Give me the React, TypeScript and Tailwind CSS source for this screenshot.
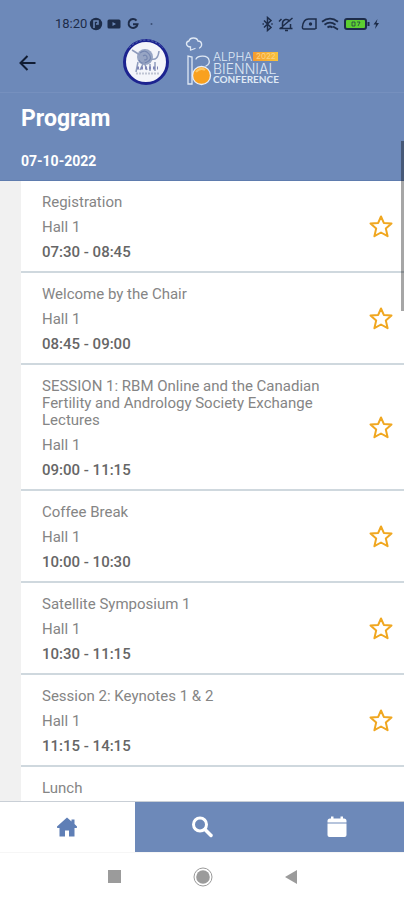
import * as React from "react";
import { clsx } from "clsx";

type Session = {
  title: string;
  hall?: string;
  time?: string;
};

const sessions: Session[] = [
  { title: "Registration", hall: "Hall 1", time: "07:30 - 08:45" },
  { title: "Welcome by the Chair", hall: "Hall 1", time: "08:45 - 09:00" },
  {
    title: "SESSION 1: RBM Online and the Canadian Fertility and Andrology Society Exchange Lectures",
    hall: "Hall 1",
    time: "09:00 - 11:15",
  },
  { title: "Coffee Break", hall: "Hall 1", time: "10:00 - 10:30" },
  { title: "Satellite Symposium 1", hall: "Hall 1", time: "10:30 - 11:15" },
  { title: "Session 2: Keynotes 1 & 2", hall: "Hall 1", time: "11:15 - 14:15" },
  { title: "Lunch" },
];

function StatusBar() {
  return (
    <div className="flex h-10 shrink-0 items-end justify-between pr-6 pl-[55px] pb-2 text-[#1d2c49]">
      <div className="flex h-4 items-center">
        <span className="w-[34px] text-[13px] leading-4">18:20</span>
        <svg viewBox="0 0 66 14" className="h-[14px] w-[66px]" fill="currentColor">
          <circle cx="7" cy="7" r="6.200" />
          <path d="M5 11V4h4v3H7" fill="none" stroke="#6d89b9" strokeWidth="1.6" />
          <rect x="18.500" y="2.500" width="13" height="9" rx="1.500" />
          <path d="M23.500 5v4l3.500-2z" fill="#6d89b9" />
          <path d="M47.500 3.600A4.500 4.500 0 1 0 48.500 7.300h-4.500" fill="none" stroke="currentColor" strokeWidth="2" />
          <circle cx="62.500" cy="7" r="1" opacity=".6" />
        </svg>
      </div>
      <svg viewBox="0 0 118 16" className="h-4 w-[118px]" fill="none" stroke="currentColor" strokeWidth="1.500">
        {/* bluetooth */}
        <path d="M2 4.500l7 7-3.500 3v-13l3.500 3-7 7" />
        <path d="M.5 8h1.400M9.300 8h1.400" />
        {/* muted bell */}
        <path d="M17.500 12.500h13M20.500 12V7.500a4 4 0 0 1 7.500-2M28.500 8v4M23 14.500h3M30.500 2L17.500 13M17 5.500l2.500-2.500" />
        {/* sim */}
        <path d="M53.500 13H42q-2 0-1.500-2.500 1-7.500 6-7.500h7.500v10" />
        <circle cx="48.500" cy="8" r="1.700" fill="currentColor" stroke="none" />
        {/* wifi */}
        <path d="M60 5.800q8-6.300 16 0M62.500 8.800q5.500-4.300 11 0" strokeWidth="1.800" />
        <path d="M65.500 11.500q2.500-2 5 0M71 10.500l5 3" strokeWidth="1.800" />
        {/* battery */}
        <rect x="83" y="3" width="21" height="10" rx="2" fill="#5ccf32" strokeWidth="2" />
        <path d="M106.500 6v4" strokeWidth="2" />
        <path d="M90 6v4h3V6zM95 6h3l-2 4" strokeWidth="1" opacity=".7" />
        <path d="M115.500 3l-4 5.500h2.500l-1 4.500 4-6H114.500z" fill="currentColor" stroke="none" />
      </svg>
    </div>
  );
}

function SocietyLogo() {
  return (
    <svg viewBox="0 0 48 48" className="size-12" aria-label="Alpha society">
      <circle cx="24" cy="24" r="21.500" fill="#f4f5fa" stroke="#1c2390" strokeWidth="3" />
      <path d="M7.500 9.500A22 22 0 0 1 40.500 9.500" fill="none" stroke="#6479b4" strokeWidth="1" strokeDasharray="2 2" />
      <circle cx="23" cy="19" r="8" fill="#97a5c4" />
      <path d="M18 15q5-4 9 1t-2 8-8-2M21 18q3-2 4 1t-3 3" fill="none" stroke="#7586b0" strokeWidth="1.200" />
      <path d="M10 12l8 5M29 21q7 2 8-8M16 24l-2 10M18 32l4-8 3 8M28 26v7M33 24v9" fill="none" stroke="#8f9cbd" strokeWidth="1.500" />
      <path d="M15 30h21" stroke="#7f86b6" strokeWidth="3" strokeDasharray="2 2" />
      <path d="M14 35.500h23" stroke="#c0c5d3" strokeWidth="2" strokeDasharray="2 1" />
    </svg>
  );
}

function ConferenceLogo() {
  return (
    <svg viewBox="0 0 96 52" className="h-[52px] w-24" aria-label="13 Alpha Biennial Conference 2022">
      <defs>
        <linearGradient id="year">
          <stop stopColor="#f59b2f" />
          <stop offset="1" stopColor="#f8c33c" />
        </linearGradient>
      </defs>
      <g fill="none" stroke="#dfe8f4" strokeWidth="1.300" strokeLinecap="round">
        <path d="M5.500 14v-3C1 11 0 6 4 5c1-4 8-4 9 0 4 0 5 5 1.500 7M6 14l4-1.500" />
        <path d="M3 20v28h4V21zM11 23c2-4 12-4 13 1 1 3-1 5-3 6" />
      </g>
      <circle cx="16.500" cy="39.500" r="9" fill="#f9a11f" stroke="#e9eff8" strokeWidth="1.300" />
      <path d="M11 36q4-5 9-2" stroke="#fdc763" strokeWidth="2" fill="none" />
      <g fill="#dfe8f5" fontFamily="Inter, sans-serif">
        <text x="28" y="25" fontSize="12" fontWeight="300">ALPHA</text>
        <text x="28" y="38" fontSize="14" fontWeight="300">BIENNIAL</text>
        <text x="28" y="47" fontSize="10" fontWeight="700" fontFamily="Lato, sans-serif">CONFERENCE</text>
      </g>
      <rect x="68" y="16" width="25" height="9" fill="url(#year)" />
      <text x="71" y="23" fontSize="8" fill="#fbd487" fontFamily="Inter, sans-serif">2022</text>
    </svg>
  );
}

function StarIcon() {
  return (
    <svg viewBox="0 0 24 24" className="size-6" fill="none" stroke="#f0a720" strokeWidth="2" strokeLinejoin="round">
      <path d="M12 2.500l2.800 6.400 7.700.5-5.700 5 1.800 7.800L12 18.500l-6.600 3.700 1.800-7.800-5.700-5 7.700-.5z" />
    </svg>
  );
}

function SessionRow({ session }: { session: Session }) {
  return (
    <li className="ml-[21px] flex items-center border-b-2 border-[#cfd8de] bg-white pr-[11px] pl-[21px]">
      <div className="flex flex-1 flex-col gap-2 pt-[13px] pb-[10px] text-[15px] leading-[17px] text-[#858585]">
        <h3 className="max-w-[290px]">{session.title}</h3>
        {session.hall && <p>{session.hall}</p>}
        {session.time && <p className="font-medium text-[#666666]">{session.time}</p>}
      </div>
      {session.time && (
        <button type="button" aria-label={`Favourite ${session.title}`}>
          <StarIcon />
        </button>
      )}
    </li>
  );
}

const tabs = [
  {
    label: "Home",
    icon: <path d="M12 2.500L2 11.500q-.5 1.500 1 1.500h1.500v8.500h5.500v-6h4v6h5.500V13H21q1.500 0 1-1.500L19.500 9V4.500h-3v2z" fill="currentColor" />,
  },
  {
    label: "Search",
    icon: (
      <g fill="none" stroke="currentColor" strokeWidth="3" strokeLinecap="round">
        <circle cx="10" cy="9.500" r="6.500" />
        <path d="M15 14.500l6 6" strokeWidth="3.500" />
      </g>
    ),
  },
  {
    label: "Calendar",
    icon: (
      <g fill="currentColor">
        <path d="M2.500 7.500V6q0-2.500 2.500-2.500h1V1.500h2.500v2h7v-2H18v2h1q2.500 0 2.500 2.500v1.500z" />
        <path d="M2.500 8.500h19V20q0 2-2 2h-15q-2 0-2-2z" />
      </g>
    ),
  },
];

export default function App() {
  const [active, setActive] = React.useState("Home");

  return (
    <div className="flex h-screen flex-col overflow-hidden bg-white font-['Roboto',sans-serif]">
      <header className="shrink-0 bg-[#6d89b9]">
        <div className="relative h-[93px] border-b border-[#7690be]">
          <StatusBar />
          <div className="flex h-[46px] items-center">
            <button type="button" aria-label="Back" className="ml-4 text-[#101c33]">
              <svg viewBox="0 0 24 24" className="size-6" fill="none" stroke="currentColor" strokeWidth="2">
                <path d="M19.500 12H4.500M11.500 5l-7 7 7 7" />
              </svg>
            </button>
          </div>
          <div className="absolute top-9 left-[122px] flex gap-[15px]">
            <div className="pt-[2px]">
              <SocietyLogo />
            </div>
            <ConferenceLogo />
          </div>
        </div>
        <div className="flex flex-col gap-5 border-b border-[#5f7cae] px-[21px] pt-[14px] pb-[9px] text-white">
          <h1 className="text-[23px] leading-6 font-bold">Program</h1>
          <h2 className="text-[14px] leading-5 font-bold">07-10-2022</h2>
        </div>
      </header>

      <main className="min-h-0 flex-1 overflow-hidden bg-[#f1f1f1]">
        <ul>
          {sessions.map((session) => (
            <SessionRow key={session.title} session={session} />
          ))}
        </ul>
      </main>

      {/* Scroll thumb */}
      <div className="absolute top-[141px] right-0 h-[170px] w-[3px] bg-black/35" />

      <nav className="grid h-[51px] shrink-0 grid-cols-3 border-t border-[#c9cfd6]">
        {tabs.map((tab) => (
          <button
            key={tab.label}
            type="button"
            aria-label={tab.label}
            onClick={() => setActive(tab.label)}
            className={clsx(
              "flex items-center justify-center",
              active === tab.label ? "bg-white text-[#5f7fb6]" : "bg-[#6d89b9] text-white"
            )}
          >
            <svg viewBox="0 0 24 24" className="size-6">
              {tab.icon}
            </svg>
          </button>
        ))}
      </nav>

      {/* System navigation */}
      <div className="flex h-12 shrink-0 items-center justify-center gap-[72px] border-t border-[#f6f6f6] text-[#9b9b9b]">
        <button type="button" aria-label="Recent apps" className="size-[13px] bg-[#9b9b9b]" />
        <button type="button" aria-label="Home screen">
          <svg viewBox="0 0 20 20" className="size-5">
            <circle cx="10" cy="10" r="9" fill="none" stroke="currentColor" />
            <circle cx="10" cy="10" r="6.800" fill="currentColor" />
          </svg>
        </button>
        <button type="button" aria-label="Go back">
          <svg viewBox="0 0 12 14" className="h-[14px] w-3" fill="currentColor">
            <path d="M12 0v14L0 7z" />
          </svg>
        </button>
      </div>
    </div>
  );
}
